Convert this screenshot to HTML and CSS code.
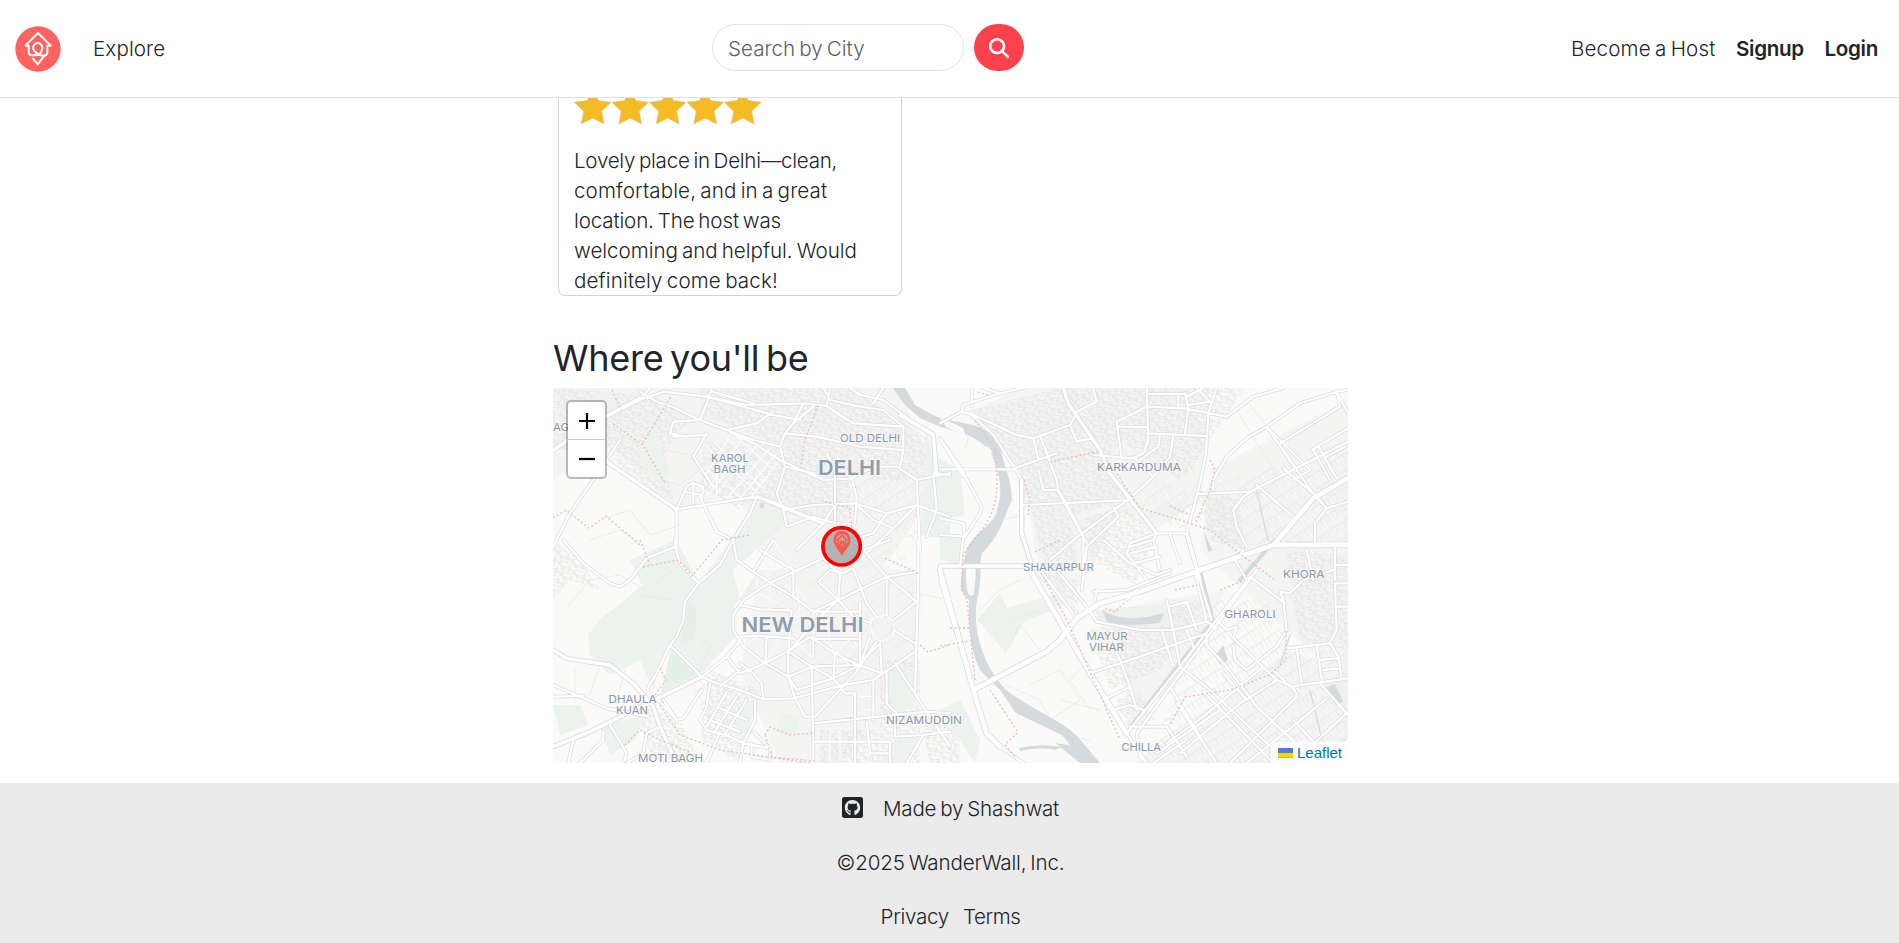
FILE: index.html
```html
<!DOCTYPE html>
<html lang="en">
<head>
<meta charset="utf-8">
<title>WanderWall</title>
<link rel="stylesheet" href="styles.css">
</head>
<body>
<header class="nav">
  <div class="nav-left">
    <svg class="logo" viewBox="0 0 138 138">
      <circle cx="69" cy="69" r="68" fill="#ff625f"/>
      <path d="M56 88H50Q41 87 41 78V59H31L69 21L107 59H97V80Q96 88 88 89L68 115L54 98M59 87Q69 90 74 84Q82 75 82 67A14 14 0 1 0 58 75Q62 80 68 83M84 88Q72 90 67 82" fill="none" stroke="#fff" stroke-width="6" stroke-linejoin="round" stroke-linecap="round"/>
    </svg>
    <a class="explore">Explore</a>
  </div>
  <div class="search">
    <div class="search-input"><span>Search by City</span></div>
    <div class="search-button">
      <svg viewBox="0 0 512 512"><path fill="#fff" d="M416 208c0 45.900-14.900 88.300-40 122.700L502.600 457.400c12.500 12.500 12.500 32.800 0 45.300s-32.800 12.500-45.300 0L330.700 376c-34.400 25.200-76.800 40-122.700 40C93.100 416 0 322.900 0 208S93.100 0 208 0S416 93.100 416 208zM208 352a144 144 0 1 0 0-288 144 144 0 1 0 0 288z"/></svg>
    </div>
  </div>
  <nav class="nav-right"><a class="host">Become a Host</a><a class="signup">Signup</a><a class="login">Login</a></nav>
</header>
<main class="content">
  <article class="review">
    <svg class="stars" viewBox="0 0 188 28">
      <defs><path id="star" d="M18.700 -10L24.300 2.500L37.200 4.200L27.700 13.300L30.200 26L18.700 20.200L7.200 26L9.700 13.300L.3 4.200L13.100 2.500Z"/></defs>
      <g fill="#f5bb25" stroke="#d9c79a" stroke-width=".6"><use href="#star"/><use href="#star" x="37.500"/><use href="#star" x="75"/><use href="#star" x="112.500"/><use href="#star" x="150"/></g>
    </svg>
    <p class="review-text"><span class="l1">Lovely place in Delhi—clean,</span><br><span class="l2">comfortable, and in a great</span><br><span class="l3">location. The host was</span><br><span class="l4">welcoming and helpful. Would</span><br><span class="l5">definitely come back!</span></p>
  </article>
  <h2 class="title">Where you'll be</h2>
  <section class="map">
    <svg class="map-canvas" viewBox="553 388 795 375">
      <defs>
        <pattern id="blocks" width="13" height="11" patternUnits="userSpaceOnUse" patternTransform="rotate(-8)">
          <path d="M0 2.500H5V0M5 2.500V7H13M9 7V11M0 8.500H3V11M9 0V4H13M2 4.500H4V6H2ZM6 9H8V10H6ZM10 1H12V2H10Z" fill="none" stroke="#e2e2e2" stroke-width=".8"/>
        </pattern>
        <pattern id="plots" width="9" height="14" patternUnits="userSpaceOnUse" patternTransform="rotate(-33)">
          <path d="M0 0V14M0 7H9M4.500 7V14" fill="none" stroke="#e6e6e6" stroke-width=".8"/>
        </pattern>
        <g id="tnw" transform="translate(540 320) scale(.33333)"><g id="nw">
          <path d="M39 390L80 360L180 300L300 240L330 204M200 425L410 568L650 530L700 545L850 610M39 680L90 580L180 450L240 360M300 215L350 245L400 262L480 300L560 330L650 375L720 420L850 480M480 300L500 250L515 204M300 240L370 215L500 230L620 255L790 250L860 258L900 285L940 310L1090 320M500 230L700 285L780 300M515 215L640 250M560 330L650 310L700 275M790 250L760 310L735 340L720 380L735 440L710 520L730 570L740 620M850 204L870 240L950 258L1030 270L1090 320M930 204L960 225L1030 240L1110 300L1180 340L1185 460L1230 465M860 400L885 450L885 610M935 475L950 530L945 610M735 340L830 350L960 380L1090 390L1090 320M850 480L935 475L1000 440L1070 440L1130 480L1230 460M720 380L640 360L560 330M730 570L820 555L945 550L1040 580L1130 555M410 568L410 690M410 568L440 500L460 488L490 500M460 488L460 550M490 500L485 545M435 515L485 525M480 530L530 635L580 660M500 345L400 350M500 340L460 410L520 500M480 300L400 305L390 340L440 350M735 440L820 460L850 480M820 260L760 310M870 204L860 258M1030 204L1000 250M1130 555L1200 580L1230 590M1080 440L1090 390M1130 480L1140 690M1180 460L1190 570L1160 650M650 530L630 580L580 660M885 610L820 590L740 620M945 550L1000 600L1060 625M885 555L850 610L770 690M1040 580L1000 640L930 660M1130 555L1060 625L980 700"/>
          <path class="thin" d="M500 380L655 520M520 365L670 505M550 340L680 480M575 335L695 445M500 460L575 340M510 500L610 350M530 520L650 375M560 535L690 385M600 535L710 400M490 440L600 530M480 500L520 535M530 440V525M500 530L590 420M630 535L715 425"/>
        </g></g>
        <g id="tsw" transform="translate(540 540) scale(.33333)"><g id="sw">
          <path d="M70 0L130 70L210 130L240 140L270 120L320 55L405 20V0M405 20L420 70L475 130L540 75L580 0M475 130L435 185L430 240L410 290L390 315L350 400L325 440V470M390 315L485 410L560 350L610 290M485 410L350 475L150 575L39 620M39 435L200 505L325 530M39 330L80 355L210 375L280 430L340 500L360 560L410 669M39 470L130 468M485 410L530 430L600 450L670 478L760 475L910 435L1000 420L1125 335M580 0L590 60L640 95L690 128L760 170L820 215M690 128L850 55M690 128L610 180L580 225L580 270L610 320L675 370L745 410L765 475L795 530L825 530M600 195L660 208L755 212M600 290L660 288L760 295M820 215H960M815 297H960M820 215V350M745 335L755 212M640 95L700 0M760 90L760 170M760 90L660 30M850 55L900 105L895 180L850 220L750 330L675 370L600 400L560 350M675 370L680 290M895 180L940 230L995 250M895 180L835 125L870 90L910 100L940 85M940 85L980 190L1010 230M820 215L895 180L1040 110L1135 95M1040 110V225M1135 0V110L1125 460M1040 110L970 30L935 0M970 30L1050 0M1040 110L1130 185M1130 185L1060 240M1125 310L1060 270M1020 310L1025 400M960 190V375M745 410L815 380L955 375L1020 310M745 410L745 335L810 290L885 340L955 375L1025 400M885 340L880 415L815 380L745 335M745 410L770 450L880 415L915 460H945V550M880 415L960 375L990 290M815 380L820 620V669M825 530L945 400L1010 305M820 550L1160 515L1230 520M820 605L1050 605V669M945 550V669M980 545L990 640H1050M1000 420V540M1040 400V490L1070 520M1065 520V590L1150 585M1065 370L1160 515L1230 620M1150 585L1100 669M1150 585L1230 575M510 430L500 500L480 540L500 570L570 590L610 610L690 625M560 455L500 560M590 470L525 575M620 480L550 590M600 390L540 440M530 500L620 540M510 540L600 575M600 370L640 400L665 430L670 478M645 485V540L610 610L600 669M640 575L690 625V660L635 650V610M540 575L500 669M350 475L410 540L430 535L485 450M370 480L410 540M360 560L320 580L310 640L260 669M190 575V600L140 650L120 669M210 555L260 640L250 669M100 600L85 669"/>
          <path class="thin" d="M690 128V205M660 160L750 210M700 0L760 90M780 215L770 150L800 180M850 220L880 340M650 290L610 320M720 300L675 370M760 295L815 350M850 297L930 375M930 297L885 340M990 250L1000 235L1040 225L1065 250L1060 285L1025 305L1000 290ZM870 565V605M900 560V605M870 605V669M900 605V669M960 470H1000M960 510H1000"/>
        </g></g>
        <g id="tne" transform="translate(940 380) scale(.33333)"><g id="ne">
          <path d="M0 130L65 95L90 100L160 165L225 265L245 300V460L270 540L310 600M0 268H225M65 95L70 75L180 40L250 24M95 24V80M130 24L180 40M90 100L230 165L280 175L390 135L410 100M280 175L295 235M300 165L350 300L355 335L440 490M225 265L350 220M295 270L310 330H355L380 370M390 135L410 185L455 175M410 95L470 65L460 24M460 225L580 235L610 220L625 180L620 24M545 235L530 125L620 80M535 140L620 142M620 80L735 85L860 110L940 50L1030 24M620 42H735M735 40L745 85L735 160M715 42V80M745 75L810 65L770 24M740 50L790 24M830 24L805 100L798 220L775 330L740 460L780 600M620 160L800 168M660 165L655 200L600 240M700 165L690 230L640 290L570 355L425 460L330 540M250 375L570 360M580 230L640 290M520 380L535 410L440 500L430 600M430 465V600M380 370L425 460M490 480L570 550L650 585L690 570M650 460L570 490L560 520L620 600M650 460L640 480L570 500M650 460H745M640 480L660 570M570 520L650 500M580 550L660 530M690 465L720 550M775 342L930 335L1224 185M820 330V300L860 230L920 175L980 140L1080 70L1190 35L1224 30M980 140L1110 270L1060 300M1020 190L1200 80L1190 35L1224 100M980 140L1115 335M1030 265L1125 345M950 315L1060 410M1115 210L1224 145M1120 210L1170 300M1135 200L1190 295M1160 230L1215 200M920 500L890 440L880 390L910 350L960 320M1125 345L1160 385L1125 430V500M1160 385L1224 365M1130 490H1224M1185 490V600M1190 555H1224M1100 510L1120 600M910 510L885 540L920 600M1020 490L1160 495M0 465L75 470L120 400L125 380L60 260L0 175M75 470L70 430L0 415M70 470L60 560M0 175L70 290"/>
        </g></g>
        <g id="tse" transform="translate(940 570) scale(.33333)"><g id="se">
          <path d="M0 30L100 360L140 490L180 530L250 579M270 0L450 310L560 490L620 579M300 0L400 130M350 0L440 110L470 155L600 180L700 180L800 155M430 20L425 60M460 65L560 60L690 10M470 60L465 90M560 90L590 60M770 0L815 150M765 5L800 155L830 175M680 90L700 180L720 290L810 360L980 520L1050 579M690 110L740 95L770 180M450 310L570 270L800 190M665 180L700 290M740 180L760 230M560 490L720 290L930 20M590 490L950 0M570 470L590 470H680L740 560M500 385L570 350L540 270L510 210M520 420L570 405L610 420M570 350L590 420M590 490L600 560L620 579M800 190V225L860 290L950 410L1070 520M830 150L860 180L890 170L880 205L1010 330M880 225L885 270L920 300L1010 230L1040 180L1030 90L1020 65L1050 70L1090 30L1180 0M930 20L1035 100M1040 235L1170 220L1190 180L1185 40M1190 40H1224M1190 110H1224M1170 220L1195 260L1205 325M1140 270L1190 265M1150 300L1200 295M1070 235L1085 340M1130 225L1145 330M1050 350L1224 325M1140 340L1224 435M1010 330L1060 350L1070 380L870 579M1000 300L1070 370M970 290L790 440L680 520M1010 330L900 400L720 550M650 550L840 420M1160 385L1070 460L920 579M1224 425L1060 579M690 350L810 550M710 400L830 579M790 365L1000 579M850 310L920 390M970 430L1130 579M1060 450L1180 579M1224 510L1130 579M640 579L740 510"/>
        </g></g>
        <g id="bignw" transform="translate(540 320) scale(.33333)"><path d="M200 425L410 568M39 392L150 315L300 235M1080 285L1180 345L1190 460M650 530L850 610"/></g>
        <g id="bigne" transform="translate(940 380) scale(.33333)"><path d="M370 24L385 70L480 210L510 280L650 460M740 460L780 600M245 300V460L270 540M0 558H250"/></g>
        <g id="bigsw" transform="translate(540 540) scale(.33333)"><path d="M39 330L80 355L210 375L280 430L340 500L360 560L410 669M485 410L150 575L39 620"/></g>
        <g id="express" transform="translate(940 570) scale(.33333)"><path d="M100 360L320 245L360 210L410 145L480 100L600 65L780 0L1000 -75H1224M1000 -75L1120 -215L1224 -275M0 0L100 360L140 490L180 530M270 0L450 310L560 490"/></g>
      </defs>
      <rect x="553" y="388" width="795" height="375" fill="#fafaf8"/>
      <g fill="#f4f4f3">
        <path d="M553 388H900L935 475L910 530L850 610L760 545L735 493L680 510L610 445L553 480ZM1020 388H1210L1200 500L1155 530L1120 510L1090 570L1070 600L1040 570L1020 470L965 415ZM1210 470L1348 400V690L1320 660L1200 550ZM760 570H915V700L840 763H780L740 670ZM1110 610L1225 590L1175 690L1130 715ZM1135 763L1290 650L1348 680V763Z"/>
      </g>
      <g fill="url(#blocks)">
        <path d="M553 388L650 395L700 420L680 430L660 460L675 500L650 495L600 445L570 450L553 450ZM700 388L850 388L930 440L935 480L870 480L790 450L730 425L700 415ZM778 410L850 450L850 525L770 510L735 495L760 455ZM705 440L775 450L740 510L700 485Z"/>
        <path d="M970 410L1060 388H1145V415L1195 435L1180 480L1120 440L1105 470L1130 500L1070 515L1020 500L1015 460ZM1145 388H1245L1210 440L1185 480L1140 430ZM1030 505L1070 510L1080 570L1045 570ZM1080 520L1125 505L1155 535L1135 585L1090 560ZM1285 550L1348 555V650L1300 640ZM1200 490L1240 500L1245 550L1210 540ZM1035 570L1075 580L1080 620ZM1090 630L1205 600L1160 670L1110 690ZM1115 700L1140 690L1155 720L1130 730Z"/>
        <path d="M553 540L580 560L600 590L570 580L553 600ZM880 660H920V763H880ZM820 730H880V763H820ZM710 670L760 690L740 763L700 740ZM630 700L680 720L700 763H655ZM920 720H960V763H930Z"/>
      </g>
      <g fill="url(#plots)">
        <path d="M680 670L760 690L720 740ZM1150 600L1270 600L1290 650L1348 650V763H1140L1180 690ZM1190 490L1280 465L1348 440V540L1240 545L1195 525ZM1155 480L1195 495L1185 530L1140 510ZM860 470L930 475L915 540L850 510Z"/>
        <path opacity=".6" d="M770 565L900 545L925 600L910 665L850 700L820 680L780 645Z"/>
      </g>
      <g fill="#ecf2ed">
        <path d="M595 395L610 391L622 411L595 430ZM636 450L655 430L670 475L655 482ZM752 453L767 444L765 470ZM755 499L780 500L790 520L733 570L740 600L755 593L756 575L735 605L733 625L737 635L700 675L680 667L667 646L653 690L640 660L610 675L590 655L588 635L601 618L625 600L642 585L630 560L676 540L699 583L730 542Z"/>
        <path d="M939 458L960 470L965 515L940 520ZM940 535L965 538L960 565L940 560ZM927 430L935 470L950 490V540L920 535ZM977 620L1000 593L1007 608L1056 594L1064 605L1024 622L1006 653ZM1095 610L1160 605L1175 625L1100 625ZM885 670L920 675L915 705L895 715ZM738 715L755 700L750 730L735 738ZM895 740L920 735L905 763H880ZM600 725L645 715L635 740L610 755ZM780 712L800 716L797 735L778 732ZM553 705L580 705L588 725L560 735ZM1155 510L1190 497L1180 510L1145 520ZM1325 685L1348 675V700L1335 710ZM960 700L980 740L975 763L940 710Z"/>
      </g>
      <g fill="#e5f0e9"><path d="M686 600L697 610L694 640L680 645L683 620ZM672 645L700 673L661 693ZM823 408L835 406L830 415Z"/></g>
      <path class="detail" d="M600 520L630 510L650 535L680 525M590 540L620 530L650 550M565 610L590 580L620 575L645 590L680 565M640 595L670 600L685 580M660 460L665 450L690 455L700 470L680 485L660 480M700 670L710 645L705 640L700 650M575 670V700M600 665L590 695M625 670L615 705M980 610L1000 590L1020 580M1010 620L1040 610M1005 655L1020 625L1040 650M1030 685L1060 670L1080 700L1050 720M1090 660L1070 680L1090 710M1005 685L1040 700L1060 735L1090 740M1060 700L1100 710M1230 400L1280 480M1250 405L1270 430M1000 520L1025 515L1020 540M950 420L970 430L965 450M900 590L950 600M800 440V470M780 415L830 430"/>
      <g fill="#d4dadd">
        <path d="M893 388H905L915 405L935 416L952 421C980 424 997 434 1001 449C1003 466 1011 474 1012 500C1002 522 1001 534 982 553C979 563 983 575 977 600C972 630 983 665 1006 690C1030 708 1060 720 1076 735L1100 763H1080C1060 747 1047 735 1033 727L1015 712L1000 690L980 670C970 650 968 625 969 600L961 590C960 575 964 560 967 548C977 530 994 525 997 510C1003 490 1000 480 996 467C993 450 980 440 967 435L938 426L920 418L905 405Z"/>
        <path d="M1102 610Q1125 625 1164 613L1160 623Q1130 627 1108 623ZM1204 532L1212 550L1208 552ZM1216 655L1223 645L1228 660L1220 665ZM1325 688L1335 684L1343 702L1336 705Z"/>
        <path d="M760 503H764V508H760ZM1019 748Q1040 743 1062 747L1055 750Q1040 746 1020 751Z"/>
      </g>
      <path fill="#fafaf8" d="M940 417L963 428L966 436L946 427ZM977 444L989 447L993 454L980 448ZM966 572C965 562 972 561 976 571L974 594Q966 602 966 572ZM1018 714L1062 735L1070 745L1045 742Z"/>
      <path d="M1257 492L1268 540M1290 635L1280 665M1310 690L1322 740" class="canal"/>
      <path d="M1200 571L1213 621L1132 725M1240 580L1275 540" class="canal wide"/>
      <g class="casing"><use href="#tnw"/><use href="#tsw"/><use href="#tne"/><use href="#tse"/></g>
      <g class="casing big"><use href="#bignw"/><use href="#bigne"/><use href="#bigsw"/></g>
      <g class="casing xl"><use href="#express"/></g>
      <g class="road"><use href="#tnw"/><use href="#tsw"/><use href="#tne"/><use href="#tse"/></g>
      <g class="road big"><use href="#bignw"/><use href="#bigne"/><use href="#bigsw"/></g>
      <g class="road xl"><use href="#express"/></g>
      <path class="rail" d="M612 390L621 410M613 424L643 445L665 483M643 443L660 415L672 395M553 518L566 510L589 528L606 516L640 545M643 567L678 560L692 576L722 540L750 535M553 518L553 515M825 502L850 508L852 530M818 405L805 440L800 470M640 540L650 565M660 668L666 680L655 695M660 705L680 735L720 750L810 763M625 745L640 730L660 740L690 752M765 735L770 727L790 735L815 733M765 735L772 757L815 761M885 558L920 574M920 645L928 652L950 645M975 420L995 450L997 480C997 520 980 530 963 555L962 590L967 600L975 680M940 646L970 641M950 628H970M1024 480L1030 500L1028 515M1050 462L1100 451M1117 474L1140 508L1180 520L1210 530L1235 550L1275 580M1210 460L1215 470L1210 490L1196 522M1041 573L1067 620L1120 740M990 690L1018 732L1005 745L1015 757M1175 590L1197 585M1220 590L1245 580M1286 631V660L1270 675L1230 690L1185 697L1170 725M1105 608L1115 612L1125 602M1035 552L1060 540M1170 506L1190 515M978 392L990 396"/>
      <g class="label">
        <text x="553" y="430.700" textLength="16" lengthAdjust="spacingAndGlyphs">AG</text>
        <text x="711" y="462" textLength="38" lengthAdjust="spacingAndGlyphs">KAROL</text><text x="713.500" y="473" textLength="32" lengthAdjust="spacingAndGlyphs">BAGH</text>
        <text x="840" y="442" textLength="60" lengthAdjust="spacingAndGlyphs">OLD DELHI</text>
        <text x="608.500" y="702.500" textLength="48" lengthAdjust="spacingAndGlyphs">DHAULA</text><text x="616" y="713.500" textLength="32" lengthAdjust="spacingAndGlyphs">KUAN</text>
        <text x="638" y="761.500" textLength="65" lengthAdjust="spacingAndGlyphs">MOTI BAGH</text><text x="886" y="724" textLength="76" lengthAdjust="spacingAndGlyphs">NIZAMUDDIN</text>
        <text x="1097" y="470.500" textLength="84" lengthAdjust="spacingAndGlyphs">KARKARDUMA</text><text x="1023" y="570.500" textLength="71" lengthAdjust="spacingAndGlyphs">SHAKARPUR</text>
        <text x="1283" y="578" textLength="41.500" lengthAdjust="spacingAndGlyphs">KHORA</text><text x="1224.500" y="618" textLength="51" lengthAdjust="spacingAndGlyphs">GHAROLI</text>
        <text x="1086.500" y="640" textLength="41" lengthAdjust="spacingAndGlyphs">MAYUR</text><text x="1089" y="651" textLength="35" lengthAdjust="spacingAndGlyphs">VIHAR</text><text x="1121.500" y="750.500" textLength="39.500" lengthAdjust="spacingAndGlyphs">CHILLA</text>
      </g>
      <g class="label city"><text x="818" y="475" textLength="63" lengthAdjust="spacingAndGlyphs">DELHI</text><text x="741.500" y="631.700" textLength="122" lengthAdjust="spacingAndGlyphs">NEW DELHI</text></g>
      <circle cx="841.600" cy="546.300" r="18.700" fill="#666" fill-opacity=".46" stroke="red" stroke-width="3.700"/>
      <path d="M842 556C839 550 833.500 546 833.500 539.500A8.500 8.500 0 0 1 850.500 539.500C850.500 546 845 550 842 556Z" fill="#f8594f"/>
      <circle cx="842" cy="540" r="6" fill="#c9a09d"/>
      <path d="M836.500 540.500L842 535.500L847.500 540.500M838.500 540V545H840.700V541.500H843.300V545H845.500V540" fill="none" stroke="#f8594f" stroke-width="1.500"/>
    </svg>
    <div class="zoom"><div class="zoom-in"><svg viewBox="0 0 16 16"><path d="M0 8H16M8 0V16" stroke="#000" stroke-width="2.200"/></svg></div><div><svg viewBox="0 0 16 16"><path d="M0 8H16" stroke="#000" stroke-width="2.200"/></svg></div></div>
    <div class="attribution"><svg viewBox="0 0 15 10"><path fill="#4c7be1" d="M0 0H15V5H0Z"/><path fill="#ffd500" d="M0 5H15V9H0Z"/><path fill="#e0bc00" d="M0 9H15V10H0Z"/></svg><span>Leaflet</span></div>
  </section>
</main>
<footer class="footer">
  <div class="made"><svg viewBox="0 32 448 448"><path fill="#212529" d="M400 32H48C21.500 32 0 53.500 0 80v352c0 26.500 21.500 48 48 48h352c26.500 0 48-21.500 48-48V80c0-26.500-21.500-48-48-48zM277.300 415.700c-8.400 1.500-11.500-3.700-11.500-8 0-5.400.2-33 .2-55.300 0-15.600-5.200-25.500-11.300-30.700 37-4.100 76-9.200 76-73.100 0-18.200-6.500-27.300-17.100-39 1.700-4.300 7.400-22-1.700-45-13.900-4.300-45.700 17.900-45.700 17.900-13.200-3.700-27.500-5.600-41.600-5.600-14.100 0-28.400 1.900-41.600 5.600 0 0-31.800-22.200-45.700-17.900-9.100 22.900-3.500 40.600-1.700 45-10.600 11.700-15.600 20.800-15.600 39 0 63.600 37.300 69 74.300 73.100-4.800 4.300-9.100 11.700-10.600 22.300-9.500 4.300-33.800 11.700-48.300-13.900-9.100-15.800-25.500-17.100-25.500-17.100-16.200-.2-1.100 10.200-1.100 10.200 10.800 5 18.400 24.200 18.400 24.200 9.700 29.700 56.100 19.700 56.100 19.700 0 13.900.2 36.500.2 40.600 0 4.300-3 9.500-11.500 8-66-22.100-112.200-84.900-112.200-158.300 0-91.800 70.200-161.500 162-161.500S388 165.600 388 257.400c.1 73.400-44.700 136.300-110.700 158.300z"/></svg><span class="made-text">Made by Shashwat</span></div>
  <div class="copyright">©2025 WanderWall, Inc.</div>
  <div class="links"><a class="privacy">Privacy</a><a class="terms">Terms</a></div>
</footer>
</body>
</html>
```
FILE: styles.css
```css
* { box-sizing: border-box; }
body {
  margin: 0;
  height: 943px;
  overflow: hidden;
  display: flex;
  flex-direction: column;
  background: #fff;
  color: #212529;
  font-family: Inter, "Liberation Sans", sans-serif;
  font-size: 20.6px;
  font-weight: 300;
  line-height: 30px;
  word-spacing: -1.7px;
  white-space: nowrap;
}
svg { display: block; }
.nav {
  height: 98px;
  flex: none;
  display: grid;
  grid-template-columns: 712px 312px 1fr;
  align-items: center;
  border-bottom: 1px solid #dee2e6;
}
.nav-left { display: flex; align-items: center; padding-left: 15px; gap: 32px; }
.logo { width: 46px; height: 46px; }
.explore { letter-spacing: .1px; }
.search { display: flex; gap: 10px; padding-bottom: 2px; }
.search-input {
  width: 252px;
  height: 47px;
  display: flex;
  align-items: center;
  border: 1px solid #dee2e6;
  border-radius: 24px;
  padding: 3px 0 0 15px;
  color: #5c6065;
}
.search-button {
  width: 50px;
  height: 47px;
  border-radius: 25px;
  background: #fe424d;
  display: flex;
  align-items: center;
  justify-content: center;
}
.search-button svg { width: 20px; height: 20px; }
.nav-right { display: flex; justify-content: flex-end; gap: 20.5px; padding: 1px 21px 0 0; }
.host { letter-spacing: .15px; }
.signup, .login { font-weight: 600; letter-spacing: -.3px; }
.content { width: 795px; margin-left: 553px; flex: none; }
.review {
  width: 344px;
  height: 198px;
  margin-left: 5px;
  padding-left: 16px;
  border: 1px solid #d3d3d5;
  border-top: 0;
  border-radius: 0 0 7px 7px;
}
.stars { width: 188px; height: 28px; margin-left: -1px; }
.review-text { margin: 20px 0 0 -1px; }
.l1 { letter-spacing: -.27px; }
.l2 { letter-spacing: .11px; }
.l3 { letter-spacing: -.15px; }
.l4 { letter-spacing: -.03px; }
.l5 { letter-spacing: .12px; }
.title { margin: 40px 0 8px; font-size: 36px; line-height: 44px; font-weight: 400; letter-spacing: -.25px; word-spacing: -3.2px; }
.map { position: relative; width: 795px; height: 375px; overflow: hidden; word-spacing: 0; }
.map-canvas { width: 795px; height: 375px; }
.casing, .road, .detail, .canal, .rail { fill: none; stroke-linejoin: round; stroke-linecap: round; }
.casing { stroke: #dcddde; stroke-width: 11px; }
.road { stroke: #fff; stroke-width: 6.500px; }
.casing.big { stroke-width: 16px; }
.road.big { stroke-width: 10px; }
.casing.xl { stroke-width: 19px; }
.road.xl { stroke-width: 14px; }
.casing .thin { stroke-width: 8px; }
.thin { stroke-width: 4px; }
.detail { stroke: #e9e9e9; stroke-width: .8px; }
.canal { stroke: #d4dadd; stroke-width: 1.2px; }
.canal.wide { stroke-width: 4px; }
.rail { stroke: #e8bcc1; stroke-width: 1.3px; stroke-dasharray: 2 2.3; stroke-linecap: butt; }
.label {
  font-size: 11px;
  font-weight: 400;
  fill: #8a99aa;
  stroke: #fafaf8;
  stroke-width: 2px;
  stroke-opacity: .7;
  paint-order: stroke;
}
.label.city { font-size: 20.500px; font-weight: 600; fill: #8e9cac; }
.zoom {
  position: absolute;
  left: 13px;
  top: 12px;
  width: 41px;
  height: 79px;
  border: 2px solid rgba(0, 0, 0, .25);
  border-radius: 5px;
  background: #fff;
  background-clip: padding-box;
}
.zoom div { height: 37px; display: flex; align-items: center; justify-content: center; }
.zoom .zoom-in { height: 38px; border-bottom: 1px solid #ccc; }
.zoom svg { width: 16px; height: 16px; }
.attribution {
  position: absolute;
  right: 0;
  bottom: 0;
  width: 77px;
  height: 21px;
  background: rgba(255, 255, 255, .8);
  display: flex;
  align-items: center;
  gap: 4px;
  padding-left: 7px;
  font: 15px "Liberation Sans", sans-serif;
  color: #0078a8;
}
.attribution svg { width: 15px; height: 10px; }
.footer {
  margin-top: 20px;
  height: 160px;
  flex: none;
  background: #ebebeb;
  display: flex;
  flex-direction: column;
  align-items: center;
  gap: 24px;
  padding: 11px 0 0 2px;
}
.made { display: flex; gap: 20px; height: 30px; align-items: center; letter-spacing: -.2px; }
.made svg { width: 21px; height: 21px; margin-bottom: 3px; }
.copyright { letter-spacing: -.17px; }
.links { display: flex; gap: 14px; }
.privacy { letter-spacing: -.3px; }
.terms { letter-spacing: -.45px; }
```
